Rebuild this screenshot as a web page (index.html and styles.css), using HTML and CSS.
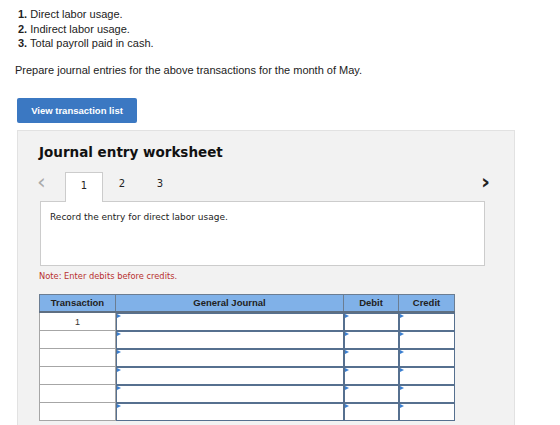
FILE: index.html
```html
<html>
<head>
    <link rel="stylesheet" href="styles.css">
</head>
<body>
    <div class="page">
        <ol class="steps">
            <li><b>1.</b> Direct labor usage.</li>
            <li><b>2.</b> Indirect labor usage.</li>
            <li><b>3.</b> Total payroll paid in cash.</li>
        </ol>
        <p class="prompt">Prepare journal entries for the above transactions for the month of May.</p>

        <button class="viewButton">View transaction list</button>

        <div class="worksheet">
            <h2 class="title">Journal entry worksheet</h2>

            <div class="tabRow">
                <span class="arrow arrowLeft">&lsaquo;</span>
                <span class="tab active">1</span>
                <span class="tab">2</span>
                <span class="tab">3</span>
                <span class="arrow arrowRight">&rsaquo;</span>
            </div>
            <div class="tabBody">Record the entry for direct labor usage.</div>

            <div class="note">Note: Enter debits before credits.</div>

            <table class="journal">
                <tr>
                    <th class="colTrans">Transaction</th>
                    <th class="colJournal">General Journal</th>
                    <th class="colDebit">Debit</th>
                    <th class="colCredit">Credit</th>
                </tr>
                <tr>
                    <td class="trans">1</td>
                    <td class="entry"><div class="field"></div></td>
                    <td class="entry"><div class="field"></div></td>
                    <td class="entry"><div class="field"></div></td>
                </tr>
                <tr>
                    <td class="trans"></td>
                    <td class="entry"><div class="field"></div></td>
                    <td class="entry"><div class="field"></div></td>
                    <td class="entry"><div class="field"></div></td>
                </tr>
                <tr>
                    <td class="trans"></td>
                    <td class="entry"><div class="field"></div></td>
                    <td class="entry"><div class="field"></div></td>
                    <td class="entry"><div class="field"></div></td>
                </tr>
                <tr>
                    <td class="trans"></td>
                    <td class="entry"><div class="field"></div></td>
                    <td class="entry"><div class="field"></div></td>
                    <td class="entry"><div class="field"></div></td>
                </tr>
                <tr>
                    <td class="trans"></td>
                    <td class="entry"><div class="field"></div></td>
                    <td class="entry"><div class="field"></div></td>
                    <td class="entry"><div class="field"></div></td>
                </tr>
                <tr>
                    <td class="trans"></td>
                    <td class="entry"><div class="field"></div></td>
                    <td class="entry"><div class="field"></div></td>
                    <td class="entry"><div class="field"></div></td>
                </tr>
            </table>
        </div>
    </div>
</body>
</html>
```

FILE: styles.css
```css
body {
    margin: 0;
    background: #fff;
    color: #222;
    font-family: "Liberation Sans", Arial, sans-serif;
}

.page {
    padding: 7px 0 0 17px;
}

.steps {
    list-style: none;
    margin: 0;
    padding: 0 0 0 1px;
    font-size: 11px;
    line-height: 14.5px;
}

.prompt {
    margin: 12px 0 0 -2px;
    font-size: 11px;
    line-height: 14px;
}

.viewButton {
    display: block;
    margin-top: 21px;
    width: 120px;
    height: 25px;
    padding: 0;
    border: none;
    border-radius: 2px;
    background: #3b78c2;
    color: #fff;
    font-family: "Liberation Sans", Arial, sans-serif;
    font-size: 9.5px;
    font-weight: bold;
}

.worksheet {
    margin-top: 7px;
    width: 475px;
    height: 296px;
    padding: 0 0 0 21px;
    background: #f2f2f2;
    border: 1px solid #e2e2e2;
}

.title {
    margin: 13px 0 0 0;
    font-family: "DejaVu Sans", Verdana, sans-serif;
    font-size: 13.5px;
    font-weight: bold;
    color: #111;
}

.tabRow {
    display: flex;
    align-items: flex-end;
    margin-top: 11px;
    height: 30px;
    width: 447px;
    position: relative;
}

.arrow {
    position: absolute;
    top: 0;
    font-size: 22px;
    line-height: 22px;
    font-family: "DejaVu Sans", sans-serif;
}

.arrowLeft {
    left: -2px;
    color: #aaa;
}

.arrowRight {
    right: -4px;
    color: #222;
    font-weight: bold;
}

.tab {
    width: 38px;
    height: 30px;
    line-height: 25px;
    text-align: center;
    font-family: "DejaVu Sans", Verdana, sans-serif;
    font-size: 10px;
    color: #222;
    box-sizing: border-box;
}

    .tab.active {
        margin-left: 26px;
        background: #fff;
        border: 1px solid #ccc;
        border-bottom: none;
        position: relative;
        top: 1px;
    }

.tabBody {
    width: 434px;
    height: 53px;
    padding: 10px 0 0 9px;
    margin-left: 1px;
    background: #fff;
    border: 1px solid #ccc;
    font-family: "DejaVu Sans", Verdana, sans-serif;
    font-size: 9px;
    color: #222;
}

.note {
    margin: 5px 0 0 0;
    font-family: "DejaVu Sans", Verdana, sans-serif;
    font-size: 8.3px;
    color: #b8312f;
}

.journal {
    margin-top: 13px;
    border-collapse: collapse;
    table-layout: fixed;
    width: 411px;
    background: #fff;
}

    .journal th {
        height: 18px;
        padding: 0;
        background: #80b1e8;
        border: 1px solid #6b7d92;
        border-bottom: 2px solid #5e6f82;
        font-size: 9.5px;
        font-weight: bold;
        color: #222;
    }

    .journal td {
        height: 17.5px;
        padding: 0;
    }

.colTrans {
    width: 75px;
}

.colJournal {
    width: 227px;
}

.colDebit {
    width: 54px;
}

.colCredit {
    width: 55px;
}

.trans {
    border: 1px solid #a6a6a6;
    text-align: center;
    font-size: 9px;
    color: #333;
}

.entry {
    border: 1px solid #56708f;
}

.field {
    height: 17px;
    box-sizing: border-box;
    border-top: 1px solid #56708f;
    border-left: 1px solid #56708f;
    position: relative;
}

    .field:before {
        content: "";
        position: absolute;
        top: 0;
        left: 0;
        border-top: 2px solid transparent;
        border-bottom: 2px solid transparent;
        border-left: 4px solid #3b7fd0;
    }
```
